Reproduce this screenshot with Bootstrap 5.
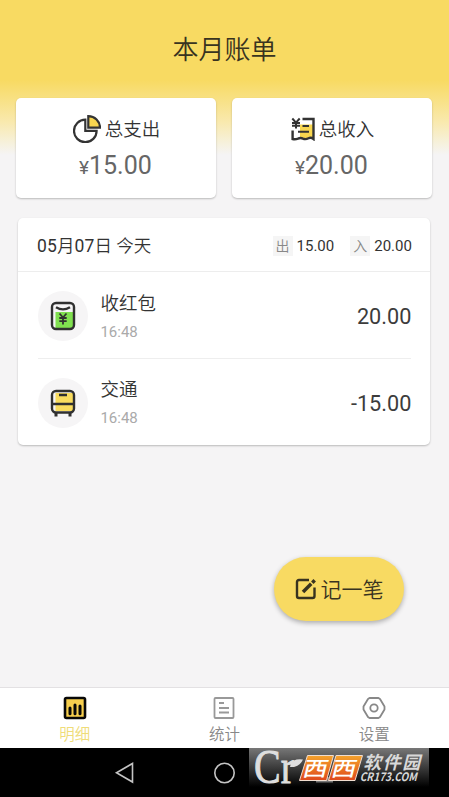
<!DOCTYPE html>
<html lang="zh-CN">
<head>
<meta charset="utf-8">
<meta name="viewport" content="width=device-width, initial-scale=1">
<title>本月账单</title>
<link href="https://cdn.jsdelivr.net/npm/bootstrap@5.3.0/dist/css/bootstrap.min.css" rel="stylesheet">
<style>
body{font-family:Roboto,"Noto Sans CJK SC",sans-serif;color:#333;height:100vh;overflow:hidden}
.screen{height:797px;background:#f5f4f5 linear-gradient(#f8da62 0,#f8da62 80px,#f8e080 97px,#f9e9ae 122px,#f6f1dc 143px,#f5f4f5 155px) no-repeat}
.screen svg{display:block;flex:none}
.cjk{font-weight:350}
.page-title{height:98.4px;font-size:26px;line-height:101px;color:#38331f}
.totals{padding:0 16.6px 0 16.4px;gap:16px}
.panel{border:0;border-radius:5px;box-shadow:0 1px 2px rgba(0,0,0,.24)}
.total{height:100px;padding-top:15.500px;flex:1 1 0}
.total-name{font-size:18.5px;line-height:30px;height:30px}
.total-name span{position:relative;top:1.500px}
.total-sum{font-size:25px;line-height:30px;color:#666;margin-top:7.500px;position:relative;left:-1px}
.total-sum span{font-size:19px}
.ledger{margin:20px 18.600px 0 18.400px;height:226.500px}
.ledger-head{height:54px;padding:2px 18.500px 0;border-bottom:1px solid #ededed;font-size:17px}
.day{font-size:17.500px}
.day b{font-weight:400;letter-spacing:.2px}
.tag{width:20px;height:20px;background:#f5f5f5;color:#888;font-size:14px;line-height:20px;text-align:center}
.head-sum{font-size:15px;margin-left:4px}
.entry{height:86px;margin:0 19px 0 20px;padding-top:2px}
.entry + .entry{border-top:1px solid #eee}
.disc{width:50px;height:50px;background:#f6f5f6}
.entry-name{font-size:18.5px;line-height:26px}
.entry-time{font-size:15px;line-height:20px;color:#aaa;margin-top:5px}
.entry-sum{font-size:21.700px;color:#3c3c3c;padding-top:2px}
.add{width:130px;height:64px;margin:0 45px 66px auto;background:#f8da62;color:#38331f;border:0;font-size:21px;box-shadow:0 2px 5px rgba(0,0,0,.3);padding:0}
.add span{padding-top:3px}
.tabs{height:61px;border-top:1px solid #e3e1e3;background:#fff}
.tab{width:149.67px;padding-top:8px;font-size:15.5px;line-height:24px;color:#888}
.tab span{padding-top:3px}
.tab.on{color:#efdc78}
.sysbar{height:49px;background:#000}
.brand{left:249px;top:0;width:180px;height:49px;background:linear-gradient(#777,#000 39px)}
.brand text{font-family:"Noto Sans CJK SC",sans-serif}
.brand .serif{font-family:"Liberation Serif",serif}
</style>
</head>
<body>
<div class="screen d-flex flex-column">
  <h1 class="page-title cjk text-center m-0">本月账单</h1>
  <div class="totals d-flex">
    <div class="panel card total align-items-center">
      <div class="total-name cjk d-flex align-items-center">
        <svg width="28" height="28" viewBox="0 0 28 28" class="me-1" fill="none" stroke="#333" stroke-width="2.2"><path d="M12.300 4.600A11.300 11.300 0 1 0 23.600 15.900H12.300Z"/><path d="M15.300 1.200V12.700H27A11.700 11.500 0 0 0 15.300 1.200Z" fill="#f8d64f"/></svg>
        <span>总支出</span>
      </div>
      <div class="total-sum"><span>¥</span>15.00</div>
    </div>
    <div class="panel card total align-items-center">
      <div class="total-name cjk d-flex align-items-center">
        <svg width="24" height="24" viewBox="0 0 24 24" class="me-1" fill="none" stroke="#333" stroke-width="2.400"><path d="M9 7.500H22V21L18 20.500 12 22 9 20.500Z" fill="#f8d64f" stroke="none"/><path d="M11.500 2H22.500V22Q20 20 17.500 21.300 14.500 22.800 12 21.600 9.500 20.300 7 21.600 4.500 22.500 1.600 22V13.500"/><path d="M1.300 1.500L5 5.600 8.700 1.500M1 5.900H9M1 8.800H9M5 5V11.500" stroke-width="2"/><path d="M11.500 9H18M7 14.800H18" stroke-width="2"/></svg>
        <span>总收入</span>
      </div>
      <div class="total-sum"><span>¥</span>20.00</div>
    </div>
  </div>

  <div class="panel card ledger">
    <div class="ledger-head d-flex align-items-center">
      <div class="day cjk me-auto"><b>05</b>月<b>07</b>日 今天</div>
      <div class="tag cjk">出</div><div class="head-sum">15.00</div>
      <div class="tag cjk ms-3">入</div><div class="head-sum">20.00</div>
    </div>
    <div class="entry d-flex align-items-center">
      <div class="disc rounded-circle d-flex align-items-center justify-content-center">
        <svg width="26" height="30" viewBox="0 0 26 30" fill="none" stroke="#303030" stroke-width="2.400"><path d="M5.500 11H23V27.500H5.500Z" fill="#80e04f" stroke="none"/><rect x="2" y="2" width="22" height="26" rx="4"/><path d="M6 6.200Q13 10.500 20 6.200"/><path d="M9.500 12.500L13 16.500 16.500 12.500M13 16V23.500M9.300 17H16.700M9.300 20.200H16.700" stroke-width="1.800"/></svg>
      </div>
      <div class="ms-2 ps-1 me-auto"><div class="entry-name cjk">收红包</div><div class="entry-time">16:48</div></div>
      <div class="entry-sum">20.00</div>
    </div>
    <div class="entry d-flex align-items-center">
      <div class="disc rounded-circle d-flex align-items-center justify-content-center">
        <svg width="26" height="28" viewBox="0 0 26 28" fill="none" stroke="#303030" stroke-width="2.400"><path d="M5.500 4H23V22H5.500Z" fill="#f9dc5e" stroke="none"/><rect x="2" y="2" width="22" height="21.500" rx="4"/><path d="M2 15H24M9 6H17"/><path d="M6 24V27.500M20 24V27.500" stroke-width="3"/></svg>
      </div>
      <div class="ms-2 ps-1 me-auto"><div class="entry-name cjk">交通</div><div class="entry-time">16:48</div></div>
      <div class="entry-sum">-15.00</div>
    </div>
  </div>

  <button class="add btn rounded-pill cjk mt-auto d-flex align-items-center justify-content-center">
    <svg width="22" height="22" viewBox="0 0 22 22" class="me-1" fill="none" stroke="#38331f" stroke-width="2.400"><path d="M14 2H4Q2 2 2 4V18Q2 20 4 20H17.500Q19.500 20 19.500 18V9.500"/><path d="M8 14L16.200 5.800" stroke-width="3.500"/><path d="M17.300 4.700L19.700 2.300" stroke-width="3.500"/></svg>
    <span>记一笔</span>
  </button>

  <nav class="tabs d-flex">
    <div class="tab on cjk d-flex flex-column align-items-center">
      <svg width="24" height="24" viewBox="0 0 24 24"><rect x="2" y="2" width="20" height="20" rx="1.500" fill="#f7cf4e" stroke="#080808" stroke-width="2.600"/><path d="M7 17.800V12M12 17.800V9M17 17.800V10" stroke="#080808" stroke-width="3" stroke-linecap="round"/></svg>
      <span>明细</span>
    </div>
    <div class="tab cjk d-flex flex-column align-items-center">
      <svg width="24" height="24" viewBox="0 0 24 24" fill="none" stroke="#999" stroke-width="1.800"><rect x="2.500" y="2" width="19" height="20" rx="1"/><path d="M7 7H12M7 12H17M7 16.500H17"/></svg>
      <span>统计</span>
    </div>
    <div class="tab cjk d-flex flex-column align-items-center">
      <svg width="24" height="24" viewBox="0 0 24 24" fill="none" stroke="#888" stroke-width="1.800" stroke-linejoin="round"><path d="M7.500 2H16.500L18 3 22.500 10.500V13.500L18 21 16.500 22H7.500L6 21 1.500 13.500V10.500L6 3Z"/><circle cx="12" cy="12" r="3.700"/></svg>
      <span>设置</span>
    </div>
  </nav>
  <div class="sysbar position-relative">
    <svg width="449" height="49" viewBox="0 0 449 49" fill="none" stroke="#c4c4c4" stroke-width="1.600"><path d="M132.500 15.500V34L116.500 24.800Z"/><circle cx="224.500" cy="25" r="9.700"/></svg>
    <div class="brand position-absolute">
      <svg width="180" height="49" viewBox="0 0 180 49" overflow="visible">
        <defs><linearGradient id="flame" x1="0" y1="0" x2="0" y2="1"><stop offset="0" stop-color="#f5a32c"/><stop offset="1" stop-color="#df481c"/></linearGradient></defs>
        <path d="M67 29H84V34.500H67Z" fill="#777"/>
        <text class="serif" x="5" y="35" font-size="48" textLength="40" lengthAdjust="spacingAndGlyphs" fill="#dedede" stroke="#dedede" stroke-width=".9">Cr</text>
        <path d="M41 19Q42 10 54 11.500Q50 20 41 19Z" fill="#dedede"/>
        <g stroke="#f1ddcf" stroke-width="1" fill="url(#flame)"><path d="M58.500 7.500H84.500L77.500 32.500H50.500Z"/><path d="M87 7.500H113.500L106 32.500H79.500Z"/></g>
        <g transform="skewX(-14)" fill="#fff"><g font-weight="500"><text transform="translate(59.500 27.500) scale(1.200 1)" font-size="20.500">西</text><text transform="translate(88 27.500) scale(1.200 1)" font-size="20.500">西</text></g>
        <g fill="#d8d8d8" font-weight="700"><text x="119.500" y="21.500" font-size="18" textLength="57">软件园</text><text x="119" y="33" font-size="11.500" textLength="57" lengthAdjust="spacingAndGlyphs">CR173.COM</text></g></g>
      </svg>
    </div>
  </div>
</div>
<script src="https://cdn.jsdelivr.net/npm/bootstrap@5.3.0/dist/js/bootstrap.bundle.min.js"></script>
</body>
</html>
